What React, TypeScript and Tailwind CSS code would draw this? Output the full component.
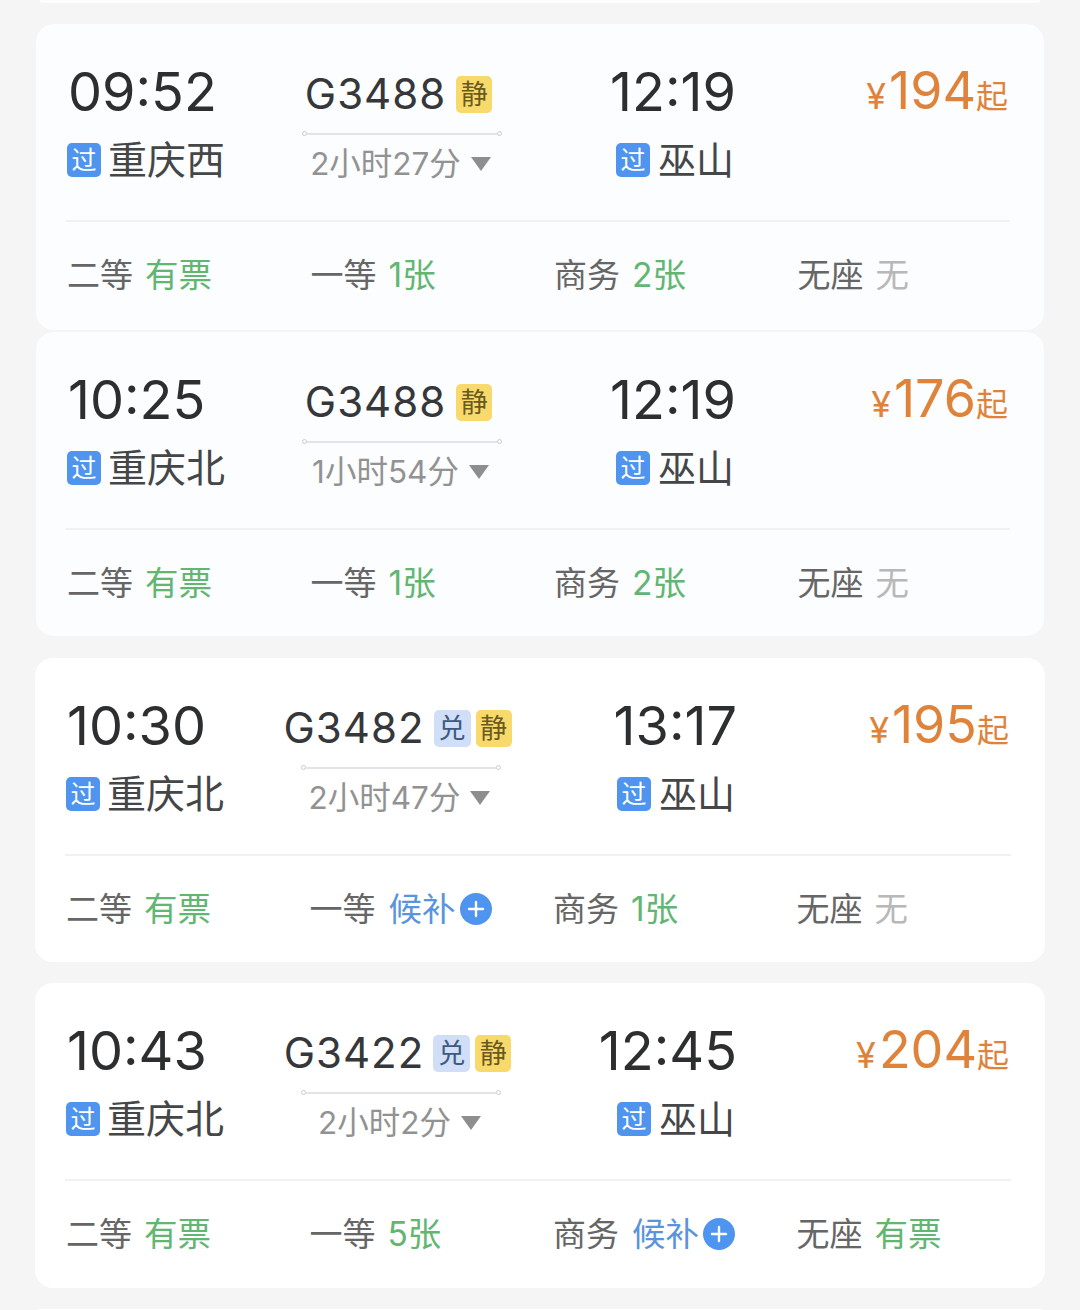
import React from 'react';

const FONT = { fontFamily: 'Inter, "Noto Sans CJK SC", sans-serif' };

type Seat = { label: string; value: string; kind: 'ok' | 'wait' | 'none' };

type Train = {
  dep: string;
  from: string;
  no: string;
  exchange?: boolean;
  line: string;
  arr: string;
  price: string;
  seats: Seat[];
  cardClass: string;
  arrClass: string;
};

const trains: Train[] = [
  {
    dep: '09:52',
    from: '重庆西',
    no: 'G3488',
    line: '2小时27分',
    arr: '12:19',
    price: '194',
    cardClass: 'mx-[36px] mt-[21px] h-[306px] bg-[#fcfdfe]',
    arrClass: 'w-[220px]',
    seats: [
      { label: '二等', value: '有票', kind: 'ok' },
      { label: '一等', value: '1张', kind: 'ok' },
      { label: '商务', value: '2张', kind: 'ok' },
      { label: '无座', value: '无', kind: 'none' },
    ],
  },
  {
    dep: '10:25',
    from: '重庆北',
    no: 'G3488',
    line: '1小时54分',
    arr: '12:19',
    price: '176',
    cardClass: 'mx-[36px] mt-[2px] h-[304px] bg-[#fcfdfe]',
    arrClass: 'w-[220px]',
    seats: [
      { label: '二等', value: '有票', kind: 'ok' },
      { label: '一等', value: '1张', kind: 'ok' },
      { label: '商务', value: '2张', kind: 'ok' },
      { label: '无座', value: '无', kind: 'none' },
    ],
  },
  {
    dep: '10:30',
    from: '重庆北',
    no: 'G3482',
    exchange: true,
    line: '2小时47分',
    arr: '13:17',
    price: '195',
    cardClass: 'mx-[35px] mt-[22px] h-[304px] bg-white',
    arrClass: 'w-[222px]',
    seats: [
      { label: '二等', value: '有票', kind: 'ok' },
      { label: '一等', value: '候补', kind: 'wait' },
      { label: '商务', value: '1张', kind: 'ok' },
      { label: '无座', value: '无', kind: 'none' },
    ],
  },
  {
    dep: '10:43',
    from: '重庆北',
    no: 'G3422',
    exchange: true,
    line: '2小时2分',
    arr: '12:45',
    price: '204',
    cardClass: 'mx-[35px] mt-[21px] h-[305px] bg-white',
    arrClass: 'w-[222px]',
    seats: [
      { label: '二等', value: '有票', kind: 'ok' },
      { label: '一等', value: '5张', kind: 'ok' },
      { label: '商务', value: '候补', kind: 'wait' },
      { label: '无座', value: '有票', kind: 'ok' },
    ],
  },
];

const PassBadge = () => (
  <span className="flex h-[34px] w-[34px] shrink-0 items-center justify-center rounded-[5px] bg-[#4f94ee] text-[25px] leading-none text-white">
    过
  </span>
);

const SeatCell = ({ seat }: { seat: Seat }) => (
  <div className="flex items-center text-[33px] leading-[44px]">
    <span className="text-[#666666]">{seat.label}</span>
    {seat.kind === 'ok' && <span className="ml-[12px] text-[33.5px] text-[#62b672]">{seat.value}</span>}
    {seat.kind === 'none' && <span className="ml-[12px] text-[33.5px] text-[#b8b8b8]">{seat.value}</span>}
    {seat.kind === 'wait' && (
      <>
        <span className="ml-[13px] text-[33.5px] text-[#5a94dc]">{seat.value}</span>
        <span className="ml-[4px] flex h-[32px] w-[32px] items-center justify-center rounded-full bg-[#4f94ee]">
          <svg width="18" height="18" viewBox="0 0 18 18">
            <path d="M9 2v14M2 9h14" stroke="#ffffff" strokeWidth="2.4" strokeLinecap="round" />
          </svg>
        </span>
      </>
    )}
  </div>
);

const TrainCard = ({ train }: { train: Train }) => (
  <div className={`rounded-[18px] pl-[32px] pt-[38px] ${train.cardClass}`}>
    <div className="flex">
      <div className="w-[220px]">
        <div className="h-[60px] text-[54px] leading-[60px] text-[#2c2e30]">{train.dep}</div>
        <div className="ml-[-1px] mt-[16px] flex h-[44px] items-center">
          <PassBadge />
          <span className="ml-[7px] text-[39px] leading-[44px] text-[#444648]">{train.from}</span>
        </div>
      </div>

      <div className="flex w-[228px] flex-col items-center">
        <div className="mr-[7px] mt-[12px] flex h-[40px] items-center">
          <span className="text-[42px] leading-[40px] tracking-[1px] text-[#35373a]">{train.no}</span>
          {train.exchange && (
            <span className="ml-[9px] flex h-[37px] w-[37px] items-center justify-center rounded-[5px] bg-[#d0dff7] text-[27px] leading-none text-[#3f5a80]">
              兑
            </span>
          )}
          <span
            className={`flex h-[37px] w-[36px] items-center justify-center rounded-[5px] bg-[#f8d96b] text-[27px] leading-none text-[#6b5a20] ${train.exchange ? 'ml-[5px]' : 'ml-[10px]'}`}
          >
            静
          </span>
        </div>
        <div className="mt-[17px] flex w-[200px] items-center">
          <span className="h-[5px] w-[5px] rounded-full border border-[#c9ccd0]" />
          <span className="h-[2px] flex-1 bg-[#e2e3e6]" />
          <span className="h-[5px] w-[5px] rounded-full border border-[#c9ccd0]" />
        </div>
        <div className="mr-[3px] mt-[6px] flex h-[44px] items-center text-[31.5px] leading-[44px] text-[#929292]">
          {train.line}
          <svg className="ml-[10px]" width="20" height="14" viewBox="0 0 20 14">
            <path d="M0 0h20L10 14z" fill="#8e8e8e" />
          </svg>
        </div>
      </div>

      <div className={`flex flex-col items-end ${train.arrClass}`}>
        <div className="h-[60px] text-[54px] leading-[60px] text-[#2c2e30]">{train.arr}</div>
        <div className="mr-[2px] mt-[16px] flex h-[44px] items-center">
          <PassBadge />
          <span className="ml-[8px] text-[38px] leading-[44px] text-[#444648]">巫山</span>
        </div>
      </div>

      <div className="mt-[-1px] flex h-[60px] flex-1 items-baseline justify-end pr-[36px] text-[#e0833a]">
        <span className="text-[36px] leading-[60px]">¥</span>
        <span className="ml-[3px] text-[52px] leading-[60px]">{train.price}</span>
        <span className="-translate-y-[1px] text-[32px] leading-[60px]">起</span>
      </div>
    </div>

    <div className="ml-[-2px] mr-[34px] mt-[34px] h-[2px] bg-[#f0f1f3]" />

    <div className="ml-[-1px] mt-[31px] grid grid-cols-[repeat(4,243.5px)]">
      {train.seats.map((seat) => (
        <SeatCell key={seat.label} seat={seat} />
      ))}
    </div>
  </div>
);

export default function App() {
  return (
    <div className="h-[1310px] w-[1080px] overflow-hidden bg-[#f5f5f5]" style={FONT}>
      <div className="mx-[40px] h-[3px] rounded-b-[10px] bg-[#fcfdfe]" />
      {trains.map((train) => (
        <TrainCard key={train.dep} train={train} />
      ))}
      <div className="mx-[36px] mt-[21px] h-[4px] rounded-t-[10px] bg-white" />
    </div>
  );
}
